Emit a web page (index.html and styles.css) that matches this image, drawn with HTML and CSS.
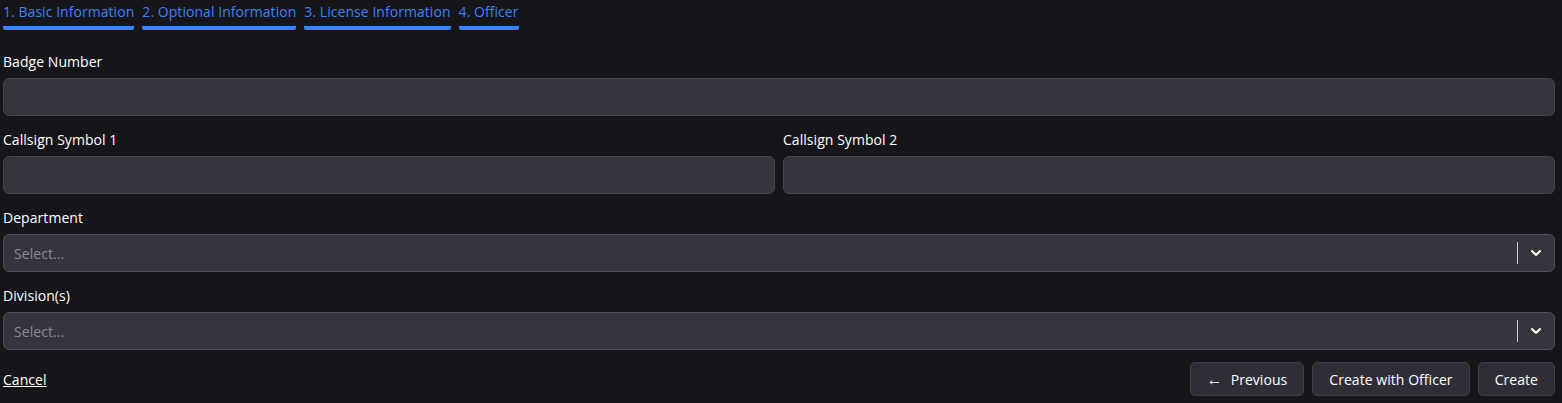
FILE: index.html
```html
<!DOCTYPE html>
<html>
<head>
<meta charset="utf-8">
<link rel="stylesheet" href="styles.css">
</head>
<body>
<div class="page">
  <nav class="tabs">
    <a class="tab">1. Basic Information</a>
    <a class="tab">2. Optional Information</a>
    <a class="tab">3. License Information</a>
    <a class="tab">4. Officer</a>
  </nav>
  <form class="form">
    <div class="field">
      <label class="label">Badge Number</label>
      <input class="input" type="text">
    </div>
    <div class="row">
      <div class="field">
        <label class="label">Callsign Symbol 1</label>
        <input class="input" type="text">
      </div>
      <div class="field">
        <label class="label">Callsign Symbol 2</label>
        <input class="input" type="text">
      </div>
    </div>
    <div class="field">
      <label class="label">Department</label>
      <div class="select">
        <span class="placeholder">Select...</span>
        <span class="sep"></span>
        <svg class="chev" width="14" height="14" viewBox="0 0 14 14"><path d="M3 5l4 4 4-4" fill="none" stroke="#fff" stroke-width="2" stroke-linecap="round" stroke-linejoin="round"/></svg>
      </div>
    </div>
    <div class="field">
      <label class="label">Division(s)</label>
      <div class="select">
        <span class="placeholder">Select...</span>
        <span class="sep"></span>
        <svg class="chev" width="14" height="14" viewBox="0 0 14 14"><path d="M3 5l4 4 4-4" fill="none" stroke="#fff" stroke-width="2" stroke-linecap="round" stroke-linejoin="round"/></svg>
      </div>
    </div>
    <div class="footer">
      <a class="cancel">Cancel</a>
      <div class="actions">
        <button class="btn" type="button"><span class="arrow">←</span>Previous</button>
        <button class="btn" type="button">Create with Officer</button>
        <button class="btn" type="button">Create</button>
      </div>
    </div>
  </form>
</div>
</body>
</html>
```
FILE: styles.css
```css
* { box-sizing: border-box; }
html, body { margin: 0; padding: 0; background: #16151a; }
body {
  font-family: "Open Sans", "Noto Sans", sans-serif;
  color: #fff;
  font-size: 14px;
  letter-spacing: 0.05px;
}
.page { padding: 0 7px 0 3px; }
.tabs { display: flex; gap: 8px; padding-top: 2px; }
.tab {
  color: #3b82f6;
  font-size: 14px;
  line-height: 20px;
  padding-bottom: 4px;
  border-bottom: 4px solid #3b82f6;
  border-radius: 0 0 2px 2px;
}
.form { display: flex; flex-direction: column; margin-top: 22px; }
.field { display: flex; flex-direction: column; flex: 1; margin-bottom: 14px; }
.label { font-size: 14px; line-height: 20px; margin-bottom: 6px; }
.row { display: flex; gap: 8px; }
.input, .select {
  height: 38px;
  background: #36353e;
  border: 1px solid #45444d;
  border-radius: 6px;
  width: 100%;
}
.select {
  display: flex; align-items: center;
  border-color: #4a5058;
  padding-left: 10px;
}
.placeholder { color: #8b8a92; flex: 1; font-size: 14px; }
.sep { width: 1px; height: 22px; background: #ccc; }
.chev { margin: 0 11px 0 11px; }
.footer { display: flex; justify-content: space-between; align-items: center; margin-top: -2px; }
.cancel { color: #fff; text-decoration: underline; }
.actions { display: flex; gap: 8px; }
.btn {
  height: 34px;
  background: #2f2e36;
  border: 1px solid #3d3c44;
  border-radius: 5px;
  color: #fff;
  font-family: inherit;
  font-size: 14px;
  letter-spacing: 0.05px;
  padding: 0 16px;
}
.arrow { margin-right: 8px; font-size: 16px; }
```
